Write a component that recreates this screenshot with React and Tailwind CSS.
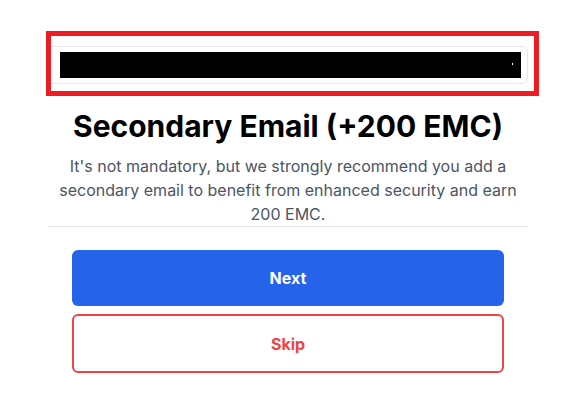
export default function App() {
  return (
    <div
      className="min-h-screen bg-white"
      style={{ fontFamily: 'Inter, "Noto Sans", sans-serif' }}
    >
      <div className="ml-[48px] w-[480px] pt-[46px]">
        {/* redacted account card with annotation frame */}
        <div className="relative">
          <div className="h-[38px] rounded-md border border-gray-200 bg-white pl-[11px] pr-[6px] pt-[5px]">
            <div className="relative h-[26px] bg-black">
              <span className="absolute right-[8px] top-[11px] h-[2px] w-[1px] bg-white" />
            </div>
          </div>
          <div className="pointer-events-none absolute left-[-2px] top-[-15px] h-[65px] w-[493px] border-[5px] border-[#ed1c24]" />
        </div>

        <div className="mt-[24px] border-b border-gray-200 text-center">
          <h1 className="text-[30px] font-bold leading-[36px] text-black">
            Secondary Email (+200 EMC)
          </h1>
          <p className="mx-auto mt-[10px] w-[470px] text-[16px] leading-[24px] text-[#4b5563]">
            It's not mandatory, but we strongly recommend you add a secondary
            email to benefit from enhanced security and earn 200 EMC.
          </p>
        </div>

        <div className="flex flex-col gap-2 px-6 pt-[23px]">
          <button className="h-[56px] rounded-md bg-[#2563eb] text-[16px] font-bold text-white">
            Next
          </button>
          <button className="h-[59px] rounded-md border-2 border-[#ef4444] bg-white text-[16px] font-bold text-[#ef4444]">
            Skip
          </button>
        </div>
      </div>
    </div>
  );
}
